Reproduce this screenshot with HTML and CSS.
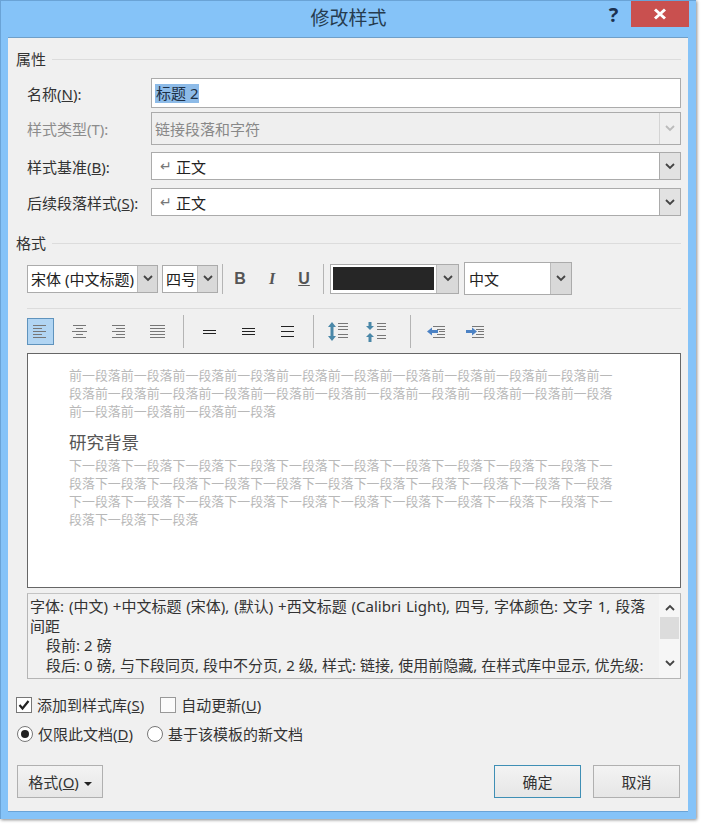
FILE: index.html
```html
<!DOCTYPE html>
<html lang="zh-CN">
<head>
<meta charset="utf-8">
<title>修改样式</title>
<link rel="stylesheet" href="styles.css">
</head>
<body>
<div class="window">
  <header class="titlebar">
    <div class="title">修改样式</div>
    <div class="help">?</div>
    <div class="close"><svg width="14" height="12" viewBox="0 0 14 12"><path d="M2 1.5 12 10.5M12 1.5 2 10.5" stroke="#fff" stroke-width="3" fill="none"/></svg></div>
  </header>
  <main class="panel">
    <div class="heading h-props"><span>属性</span></div>
    <div class="form-row row-name"><label>名称(<u>N</u>):</label>
      <div class="field"><span class="sel">标题 2</span></div></div>
    <div class="form-row row-type"><label class="dim">样式类型(T):</label>
      <div class="field disabled"><span class="val">链接段落和字符</span><span class="drop off"><svg class="chev" viewBox="0 0 10 7"><path d="M1 1 5 5 9 1" /></svg></span></div></div>
    <div class="form-row row-sel"><label>样式基准(<u>B</u>):</label>
      <div class="field"><span class="ret">↵</span><span class="val dark">正文</span><span class="drop"><svg class="chev" viewBox="0 0 10 7"><path d="M1 1 5 5 9 1" /></svg></span></div></div>
    <div class="form-row row-sel row-next"><label>后续段落样式(<u>S</u>):</label>
      <div class="field"><span class="ret">↵</span><span class="val dark">正文</span><span class="drop"><svg class="chev" viewBox="0 0 10 7"><path d="M1 1 5 5 9 1" /></svg></span></div></div>

    <div class="heading h-format"><span>格式</span></div>
    <div class="toolbar-font">
      <div class="combo c-font"><span class="val dark">宋体 (中文标题)</span><span class="drop"><svg class="chev" viewBox="0 0 10 7"><path d="M1 1 5 5 9 1" /></svg></span></div>
      <div class="combo c-size"><span class="val dark">四号</span><span class="drop"><svg class="chev" viewBox="0 0 10 7"><path d="M1 1 5 5 9 1" /></svg></span></div>
      <div class="vsep s-font"></div>
      <b class="fmt f-b">B</b><i class="fmt f-i">I</i><u class="fmt f-u">U</u>
      <div class="vsep s-color"></div>
      <div class="combo c-color"><span class="swatch"></span><span class="drop"><svg class="chev" viewBox="0 0 10 7"><path d="M1 1 5 5 9 1" /></svg></span></div>
      <div class="combo c-lang"><span class="val dark">中文</span><span class="drop"><svg class="chev" viewBox="0 0 10 7"><path d="M1 1 5 5 9 1" /></svg></span></div>
    </div>
    <div class="rule"></div>
    <div class="toolbar-para">
      <div class="tool active"><svg width="25" height="25" viewBox="0 0 25 25"><path class="ln" d="M5 6.500H18M5 9.500H14M5 12.500H18M5 15.500H14M5 18.500H18"/></svg></div>
      <div class="tool"><svg width="27" height="27" viewBox="0 0 27 27"><path class="ln" d="M7 7.500H20M10 10.500H17M6 13.500H21M10 16.500H17M7 19.500H20"/></svg></div>
      <div class="tool"><svg width="27" height="27" viewBox="0 0 27 27"><path class="ln" d="M7 7.500H20M11 10.500H20M7 13.500H20M11 16.500H20M7 19.500H20"/></svg></div>
      <div class="tool"><svg width="27" height="27" viewBox="0 0 27 27"><path class="ln" d="M6 7.500H21M6 10.500H21M6 13.500H21M6 16.500H21M6 19.500H21"/></svg></div>
      <div class="vsep"></div>
      <div class="tool"><svg width="27" height="27" viewBox="0 0 27 27"><path class="bl" d="M7 12.500H20M7 15.500H20"/></svg></div>
      <div class="tool"><svg width="27" height="27" viewBox="0 0 27 27"><path class="bl" d="M7 10.500H20M7 13.500H20M7 16.500H20"/></svg></div>
      <div class="tool"><svg width="27" height="27" viewBox="0 0 27 27"><path class="bl" d="M7 8.500H20M7 13.500H20M7 18.500H20"/></svg></div>
      <div class="vsep"></div>
      <div class="tool"><svg width="27" height="27" viewBox="0 0 27 27"><path class="ar" d="M6 4 10 9H7.500V18H10L6 23 2 18H4.500V9H2Z"/><path class="ln" d="M12 5.500H22M12 8.500H22M12 11.500H22M12 16.500H22M12 19.500H22"/></svg></div>
      <div class="tool"><svg width="27" height="27" viewBox="0 0 27 27"><path class="ar" d="M5 12 9 8H6.500V4H3.500V8H1ZM5 15 9 19H6.500V24H3.500V19H1Z"/><path class="ln" d="M12 5.500H21M12 8.500H21M12 11.500H21M12 17.500H21M12 20.500H21"/></svg></div>
      <div class="vsep wide"></div>
      <div class="tool"><svg width="27" height="27" viewBox="0 0 27 27"><path class="ar2" d="M4 13.500 9 9.500V12H15V15H9V17.500Z"/><path class="ln" d="M10 8.500H22M14 11.500H22M16 13.500H22M14 16.500H22M10 19.500H22"/></svg></div>
      <div class="tool"><svg width="27" height="27" viewBox="0 0 27 27"><path class="ar2" d="M15 13.500 10 9.500V12H4V15H10V17.500Z"/><path class="ln" d="M10 8.500H22M14 11.500H22M16 13.500H22M14 16.500H22M10 19.500H22"/></svg></div>
    </div>
    <section class="preview">
      <p class="ghost">前一段落前一段落前一段落前一段落前一段落前一段落前一段落前一段落前一段落前一段落前一段落前一段落前一段落前一段落前一段落前一段落前一段落前一段落前一段落前一段落前一段落前一段落前一段落前一段落前一段落</p>
      <p class="sample">研究背景</p>
      <p class="ghost">下一段落下一段落下一段落下一段落下一段落下一段落下一段落下一段落下一段落下一段落下一段落下一段落下一段落下一段落下一段落下一段落下一段落下一段落下一段落下一段落下一段落下一段落下一段落下一段落下一段落下一段落下一段落下一段落下一段落下一段落下一段落下一段落下一段落下一段落</p>
    </section>
    <section class="desc">
      <div class="desc-text">
        <p class="lead">字体: (中文) +中文标题 (宋体), (默认) +西文标题 (Calibri Light), 四号, 字体颜色: 文字 1, 段落间距</p>
        <p class="ind">段前: 2 磅</p>
        <p class="ind">段后: 0 磅, 与下段同页, 段中不分页, 2 级, 样式: 链接, 使用前隐藏, 在样式库中显示, 优先级:</p>
      </div>
      <div class="scroll">
        <svg class="chev sc" viewBox="0 0 10 7"><path d="M1 6 5 2 9 6"/></svg>
        <div class="thumb"></div>
        <svg class="chev sc sc-down" viewBox="0 0 10 7"><path d="M1 1 5 5 9 1"/></svg>
      </div>
    </section>
    <div class="opt-row checks">
      <span class="box"><svg width="14" height="14" viewBox="0 0 14 14"><path d="M2.500 7 5.500 10.500 11.500 3" fill="none" stroke="#222" stroke-width="2.200"/></svg></span><span class="opt">添加到样式库(<u>S</u>)</span>
      <span class="box second"></span><span class="opt">自动更新(<u>U</u>)</span>
    </div>
    <div class="opt-row radios">
      <span class="radio on"></span><span class="opt">仅限此文档(<u>D</u>)</span>
      <span class="radio second"></span><span class="opt">基于该模板的新文档</span>
    </div>
    <div class="buttons">
      <button class="btn b-format">格式(<u>O</u>)<span class="caret"></span></button>
      <button class="btn b-ok">确定</button>
      <button class="btn b-cancel">取消</button>
    </div>
  </main>
</div>
</body>
</html>
```
FILE: styles.css
```css
* { box-sizing: border-box; }
html, body { margin: 0; padding: 0; background: #fff; }
body {
  width: 702px; height: 824px; overflow: hidden;
  font-family: "Noto Sans", "Noto Sans CJK SC", sans-serif;
  font-size: 15px; color: #333;
}
p { margin: 0; }
.window {
  width: 696px; height: 819px;
  background: #85c3f8;
  border-top: 1px solid #6aa3d6;
  border-left: 1px solid #6aa3d6;
  box-shadow: 1px 1px 3px #8a8a8a;
  display: flex; flex-direction: column;
}
.titlebar {
  height: 36px; flex: none;
  display: flex; align-items: flex-start;
  position: relative;
}
.title {
  position: absolute; left: 0; right: 0; top: 4px;
  text-align: center; font-size: 19px; line-height: 27px; color: #263c4f;
}
.help {
  margin-left: 600px; width: 25px; text-align: center;
  font-size: 20px; font-weight: bold; line-height: 28px; color: #1b3150;
}
.close {
  margin-left: 5px; width: 58px; height: 26px;
  background: #c9504f;
  display: flex; align-items: center; justify-content: center;
}
.panel {
  width: 680px; height: 774px; margin-left: 7px;
  background: #f0f0f0;
  border-top: 1px solid #6f9fc8;
  padding: 0 7px 0 8px;
  box-shadow: 0 1px 0 #6aa3d6;
}
.heading { display: flex; align-items: center; height: 20px; line-height: 20px; color: #333; font-size: 15px; }
.heading::after { content: ""; flex: 1; height: 1px; background: #dcdcdc; margin-left: 6px; }
.h-props { margin-top: 11px; }
.h-format { margin-top: 17px; }

.form-row { display: grid; grid-template-columns: 124px 1fr; align-items: center; margin-left: 11px; }
.row-name { height: 30px; margin-top: 9px; }
.row-type { height: 33px; margin-top: 4px; }
.row-sel { height: 28px; margin-top: 7px; }
.row-next { margin-top: 8px; }
.form-row label { color: #333; }
.form-row label.dim { color: #8c8c8c; }
.field {
  height: 100%; display: flex; align-items: center;
  background: #fff; border: 1px solid #ababab; padding-left: 3px;
}
.field.disabled { background: #efefef; color: #888; }
.sel { background: #8dbbe8; color: #1c2f45; padding: 0 1px; line-height: 19px; }
.val { flex: 1; padding-left: 0; white-space: nowrap; }
.dark { color: #222; }
.ret { color: #777; font-size: 14px; width: 21px; padding-left: 5px; line-height: 1; }
.drop {
  flex: none; width: 21px; align-self: stretch;
  display: flex; align-items: center; justify-content: center;
  background: #e2e2e2; border: 1px solid #ababab; border-width: 0 0 0 1px;
}
.drop.off { background: #efefef; border-color: #d4d4d4; }
.drop.off .chev path { stroke: #bbb; }
.chev { width: 10px; height: 7px; display: block; }
.chev path { fill: none; stroke: #444; stroke-width: 1.8; }

.toolbar-font { display: flex; align-items: center; height: 33px; margin-top: 9px; margin-left: 11px; }
.combo {
  display: flex; align-items: center; background: #fff;
  border: 1px solid #ababab; padding-left: 3px; height: 28px;
}
.combo .drop { background: #d9d9d9; border-left: 1px solid #bbb; }
.c-font { width: 131px; }
.c-size { width: 56px; margin-left: 4px; }
.c-font .drop, .c-size .drop { width: 20px; }
.vsep { width: 1px; height: 30px; background: #b4b4b4; flex: none; }
.s-font { margin-left: 4px; }
.fmt {
  width: 32px; text-align: center; font-size: 16px; color: #555; font-weight: bold;
  font-family: "Liberation Sans", sans-serif;
}
.f-b { margin-left: 1px; }
.f-i { font-family: "Liberation Serif", serif; }
.s-color { margin-left: 3px; }
.c-color { width: 129px; height: 30px; margin-left: 6px; padding: 2px 0 2px 2px; }
.swatch { width: 102px; height: 23px; background: #262626; margin-right: 2px; }
.c-color .drop { margin: -2px 0; width: 22px; }
.c-lang { width: 108px; height: 33px; margin-left: 5px; }
.c-lang .val { padding-left: 1px; }

.rule { height: 1px; background: #dcdcdc; margin: 13px 0 0 11px; }
.toolbar-para { display: flex; align-items: center; gap: 12px; height: 27px; margin: 9px 0 0 11px; }
.toolbar-para .vsep { height: 33px; }
.toolbar-para .vsep.wide { margin-left: 6px; }
.tool { width: 27px; height: 27px; flex: none; }
.tool svg { display: block; }
.tool.active { background: #b1d5f3; border: 1px solid #5f93bd; }
.ln { stroke: #777; stroke-width: 1; fill: none; }
.bl { stroke: #222; stroke-width: 1.2; fill: none; }
.ar { fill: #4a87a8; }
.ar2 { fill: #4c82c4; }

.preview {
  height: 235px; margin: 8px 0 0 11px; padding: 12px 0 0 41px;
  background: #fff; border: 1px solid #666;
}
.ghost { width: 546px; font-size: 12.95px; line-height: 18px; color: #b8b8b8; word-break: break-all; }
.sample { margin-top: 11px; font-size: 17.5px; line-height: 22px; color: #555; }
.preview .sample + .ghost { margin-top: 3px; }

.desc {
  height: 86px; margin: 5px 0 0 11px; display: flex;
  border: 1px solid #b5b5b5; border-top-color: #c4c4c4; background: #f1f1f1; overflow: hidden;
}
.desc-text { flex: 1; padding: 3px 0 0 2px; line-height: 19.5px; color: #333; font-size: 15px; word-spacing: 0.2px; }
.lead { word-spacing: 1px; padding-right: 2px; }
.ind { padding-left: 16px; white-space: nowrap; }
.scroll {
  width: 21px; flex: none; background: #f6f6f6;
  display: flex; flex-direction: column; align-items: center;
}
.sc { margin-top: 10px; }
.thumb { width: 19px; height: 22px; background: #dcdcdc; margin-top: 6px; }
.sc-down { margin-top: 21px; }

.opt-row { display: flex; align-items: center; height: 20px; line-height: 20px; color: #333; }
.checks { margin-top: 16px; }
.radios { margin-top: 9px; }
.box { width: 16px; height: 16px; background: #fff; border: 1px solid #777; flex: none; display: flex; align-items: center; justify-content: center; }
.box.second { margin-left: 16px; background: #fbfbfb; border-color: #999; }
.checks .opt { margin-left: 5px; }
.radio { width: 16px; height: 16px; background: #fff; border: 1px solid #777; border-radius: 50%; flex: none; position: relative; margin-left: 1px; }
.radio.on::after { content: ""; position: absolute; inset: 3px; background: #222; border-radius: 50%; }
.radio.second { margin-left: 14px; }
.radios .opt { margin-left: 5px; }

.buttons { display: flex; margin: 21px 0 0 1px; height: 33px; }
.btn {
  height: 33px; font: inherit; color: #333;
  background: linear-gradient(#f3f3f3, #e6e6e6);
  border: 1px solid #b0b0b0; padding: 0;
}
.b-format { width: 86px; }
.b-ok { width: 87px; margin-left: 391px; border-color: #3f8fb5; }
.b-cancel { width: 87px; margin-left: 12px; }
.caret { display: inline-block; margin-left: 5px; border: 4px solid transparent; border-top-color: #222; border-bottom-width: 0; vertical-align: 2px; }
```
